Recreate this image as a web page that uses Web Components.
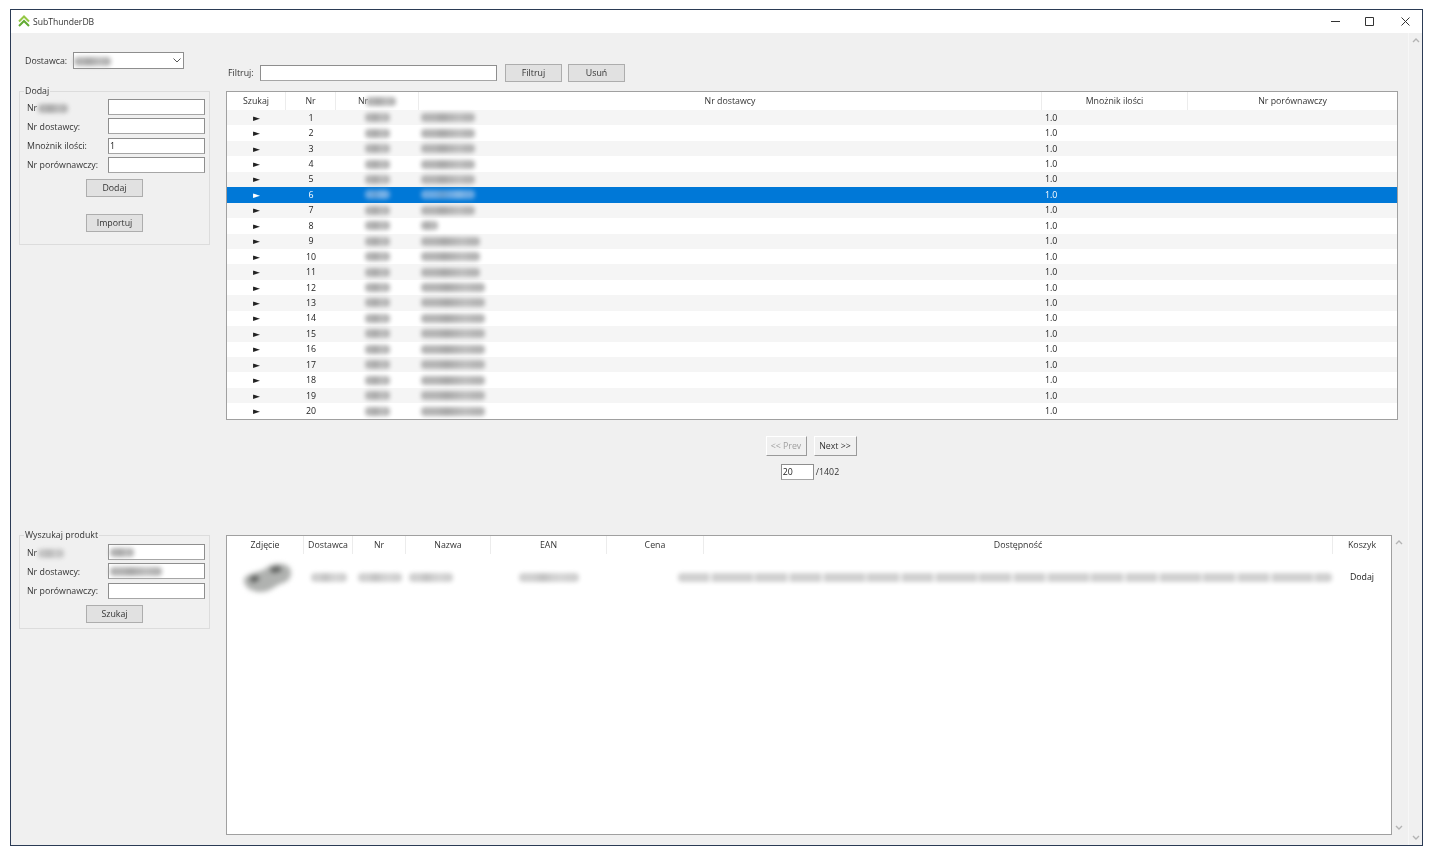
<!DOCTYPE html>
<html lang="pl">
<head>
<meta charset="utf-8">
<title>SubThunderDB</title>
<style>
  html, body { margin: 0; background: #fff; }
  body { padding: 9px 0 0 10px; font: 8.8px "Open Sans", "Liberation Sans", sans-serif; color: #222; }
</style>
</head>
<body>
<app-window>
  <title-bar slot="title" text="SubThunderDB"></title-bar>

  <split-pane style="height:502px">
    <side-column slot="side" pad="19">
      <field-row label="Dostawca:" wide>
        <combo-box><blur-text w="37" tone="#b4b4b4" gap="-1"></blur-text></combo-box>
      </field-row>
      <group-box legend="Dodaj" style="margin-top:22px">
        <field-row><span slot="label-extra">Nr <blur-text w="30" gap="-2"></blur-text></span><text-box></text-box></field-row>
        <field-row label="Nr dostawcy:"><text-box></text-box></field-row>
        <field-row label="Mnożnik ilości:"><text-box>1</text-box></field-row>
        <field-row label="Nr porównawczy:"><text-box></text-box></field-row>
        <button-row style="margin-top:2.67px"><win-button>Dodaj</win-button></button-row>
        <button-row style="margin-top:13.67px;margin-bottom:12px"><win-button>Importuj</win-button></button-row>
      </group-box>
    </side-column>
    <main-column>
      <filter-bar></filter-bar>
      <data-grid id="suppliers" style="height:329px"></data-grid>
      <pager-bar page="20" total="/1402"></pager-bar>
    </main-column>
  </split-pane>

  <split-pane style="height:300px" tight>
    <side-column slot="side">
      <group-box legend="Wyszukaj produkt">
        <field-row style="margin-top:1px"><span slot="label-extra">Nr <blur-text w="26" gap="-2" tone="#c4c4c4"></blur-text></span><text-box><blur-text w="24"></blur-text></text-box></field-row>
        <field-row label="Nr dostawcy:"><text-box><blur-text w="52"></blur-text></text-box></field-row>
        <field-row label="Nr porównawczy:"><text-box></text-box></field-row>
        <button-row style="margin-top:2.67px;margin-bottom:5px"><win-button>Szukaj</win-button></button-row>
      </group-box>
    </side-column>
    <main-column row>
      <data-grid id="products" style="flex:1"></data-grid>
      <scroll-bar></scroll-bar>
    </main-column>
  </split-pane>
</app-window>

<script>
function shadow(el, html) {
  el.attachShadow({ mode: 'open' });
  el.shadowRoot.innerHTML = html;
}

class AppWindow extends HTMLElement {
  connectedCallback() {
    shadow(this, `
      <style>
        :host { display: flex; flex-direction: column; width: 1413px; height: 837px; box-sizing: border-box;
          border: 1px solid #2b3b55; background: #f0f0f0; filter: blur(0.3px); }
        .body { flex: 1; display: flex; min-height: 0; }
        .main { flex: 1; min-width: 0; }
      </style>
      <slot name="title"></slot>
      <div class="body">
        <div class="main"><slot></slot></div>
        <scroll-bar outer></scroll-bar>
      </div>`);
  }
}

class TitleBar extends HTMLElement {
  connectedCallback() {
    shadow(this, `
      <style>
        :host { display: flex; align-items: center; height: 23px; background: #fff; padding-left: 7px; color: #333; }
        .logo { width: 12px; height: 12px; margin: -2px 3px 0 0; }
        .text { flex: 1; font-size: 8.6px; }
        .btn { width: 34px; height: 23px; display: flex; align-items: center; justify-content: center; }
        .btn.min { width: 30px; }
        .btn.mid { width: 38px; }
        .btn svg { width: 9px; height: 9px; }
      </style>
      <svg class="logo" viewBox="0 0 12 12"><path d="M1 6.500 6 1.500l5 5" fill="none" stroke="#94c845" stroke-width="2"/><path d="M1 11 6 6l5 5" fill="none" stroke="#62ab33" stroke-width="2"/></svg>
      <span class="text">${this.getAttribute('text')}</span>
      <span class="btn min"><svg viewBox="0 0 9 9"><path d="M0 4.500h9" stroke="#333" fill="none"/></svg></span>
      <span class="btn mid"><svg viewBox="0 0 9 9"><path d="M.5.5h8v8h-8z" stroke="#333" fill="none"/></svg></span>
      <span class="btn"><svg viewBox="0 0 9 9"><path d="M.5.5l8 8M8.500.5l-8 8" stroke="#333" fill="none"/></svg></span>`);
  }
}

class ScrollBar extends HTMLElement {
  connectedCallback() {
    const arrow = d => `<svg viewBox="0 0 8 5"><path d="${d}" fill="none" stroke="#b4b4b4" stroke-width="1.4"/></svg>`;
    shadow(this, `
      <style>
        :host { display: flex; flex-direction: column; justify-content: space-between; width: 14px; flex: none;
          box-sizing: border-box; padding: 5px 0; background: #f0f0f0; align-items: center; }
        :host([outer]) { border-left: 1px solid #f7f7f7; }
        svg { width: 8px; height: 5px; }
      </style>
      ${arrow('M1 4l3-3 3 3')}${arrow('M1 1l3 3 3-3')}`);
  }
}

class SplitPane extends HTMLElement {
  connectedCallback() {
    shadow(this, `
      <style>
        :host { display: grid; grid-template-columns: 193px 1fr; column-gap: 15px; box-sizing: border-box;
          padding: 0 10px 0 7px; }
        :host([tight]) { padding-right: 2px; }
      </style>
      <slot name="side"></slot><slot></slot>`);
  }
}

class SideColumn extends HTMLElement {
  connectedCallback() {
    shadow(this, `<style>:host { display: block; padding-top: ${this.getAttribute('pad') || 0}px; }</style><slot></slot>`);
  }
}

class MainColumn extends HTMLElement {
  connectedCallback() {
    shadow(this, `
      <style>
        :host { display: flex; flex-direction: column; min-width: 0; }
        :host([row]) { flex-direction: row; }
      </style><slot></slot>`);
  }
}

class GroupBox extends HTMLElement {
  connectedCallback() {
    shadow(this, `
      <style>
        :host { display: block; border: 1px solid #dcdcdc; padding: 0 4px 0 7px; margin: 0 1px; }
        .legend { width: fit-content; margin: -7px 0 1px -3px; padding: 0 1px; height: 13px; line-height: 13px; background: #f0f0f0; font-size: 8.8px; color: #333; }
        .rows { display: flex; flex-direction: column; gap: 3.33px; }
      </style>
      <div class="legend">${this.getAttribute('legend')}</div>
      <div class="rows"><slot></slot></div>`);
  }
}

class FieldRow extends HTMLElement {
  connectedCallback() {
    const label = this.getAttribute('label') || '';
    shadow(this, `
      <style>
        :host { display: flex; align-items: center; }
        .label { flex: none; width: 81px; padding-top: 1px; white-space: nowrap; color: #333; font-size: 8.8px; }
        :host([wide]) .label { width: 48px; padding-left: 7px; }
      </style>
      <span class="label">${label}<slot name="label-extra"></slot></span>
      <slot></slot>`);
  }
}

class TextBox extends HTMLElement {
  connectedCallback() {
    shadow(this, `
      <style>
        :host { display: flex; align-items: center; box-sizing: border-box; height: 16px; width: var(--w, 97px); padding-left: 1px;
          background: #fff; border: 1px solid #8e8e8e; border-bottom-color: #a6a6a6; color: #222; font-size: 8.8px; }
      </style><slot></slot>`);
  }
}

class ComboBox extends HTMLElement {
  connectedCallback() {
    shadow(this, `
      <style>
        :host { display: flex; align-items: center; box-sizing: border-box; height: 17px; width: 111px; padding-left: 1px;
          background: #fff; border: 1px solid #8e8e8e; }
        .val { flex: 1; }
        svg { width: 8px; height: 5px; margin-right: 2px; }
      </style>
      <span class="val"><slot></slot></span>
      <svg viewBox="0 0 8 5"><path d="M.500.5 4 4 7.500.5" fill="none" stroke="#555"/></svg>`);
  }
}

class WinButton extends HTMLElement {
  connectedCallback() {
    shadow(this, `
      <style>
        :host { display: flex; align-items: center; justify-content: center; box-sizing: border-box; width: 57px; height: 18px;
          background: #e1e1e1; border: 1px solid #adadad; color: #333; font-size: 8.8px; }
        :host([flat]) { width: 41px; height: 20px; background: #f0f0f0; border-color: #fff #9a9a9a #9a9a9a #fff; }
        :host([flat]:not([disabled])) { width: 43px; }
        :host([disabled]) { color: #a0a0a0; }
      </style><slot></slot>`);
  }
}

class ButtonRow extends HTMLElement {
  connectedCallback() {
    shadow(this, `<style>:host { display: flex; justify-content: center; margin-left: -3px; }</style><slot></slot>`);
  }
}

class BlurText extends HTMLElement {
  connectedCallback() {
    const w = this.getAttribute('w') || 30;
    const gap = this.getAttribute('gap') || 0;
    const tone = this.getAttribute('tone') || '#b4b4b4';
    // long values read as words under the blur, short ones as one mottled smear
    const texture = this.hasAttribute('words')
      ? 'repeating-linear-gradient(90deg, transparent 0 31px, rgba(255,255,255,.7) 31px 34px, transparent 34px 75px, rgba(255,255,255,.7) 75px 77px, transparent 77px 109px, rgba(255,255,255,.7) 109px 112px)'
      : 'linear-gradient(90deg, transparent 25%, rgba(0,0,0,.07) 40%, transparent 55%, rgba(255,255,255,.15) 70%, transparent 85%)';
    shadow(this, `
      <style>
        :host { display: inline-block; vertical-align: middle; width: ${w}px; height: 9px; margin-left: ${gap}px;
          background: ${texture}, ${tone}; border-radius: 4px; filter: blur(2.1px); }
      </style>`);
  }
}

class FilterBar extends HTMLElement {
  connectedCallback() {
    shadow(this, `
      <style>
        :host { display: flex; align-items: center; height: 18px; margin: 31px 0 9px; padding-left: 2px; color: #333; }
        .lbl { width: 32px; font-size: 8.8px; }
        text-box { --w: 237px; margin-right: 8px; }
        win-button { margin-right: 6px; }
      </style>
      <span class="lbl">Filtruj:</span>
      <text-box></text-box>
      <win-button>Filtruj</win-button>
      <win-button>Usuń</win-button>`);
  }
}

class PagerBar extends HTMLElement {
  connectedCallback() {
    shadow(this, `
      <style>
        :host { display: flex; flex-direction: column; align-items: center; margin-top: 16px; }
        .btns { display: flex; gap: 7px; margin-left: -2px; }
        .page { display: flex; align-items: center; margin-top: 8px; margin-left: -4px; color: #333; }
        text-box { --w: 33px; margin-right: 2px; }
      </style>
      <div class="btns"><win-button flat disabled>&lt;&lt; Prev</win-button><win-button flat>Next &gt;&gt;</win-button></div>
      <div class="page"><text-box>${this.getAttribute('page')}</text-box><span>${this.getAttribute('total')}</span></div>`);
  }
}

class DataGrid extends HTMLElement {
  constructor() {
    super();
    shadow(this, `
      <style>
        :host { display: block; box-sizing: border-box; background: #fff; border: 1px solid #a0a0a0; overflow: hidden; color: #222; font-size: 8.8px; }
        .row { display: grid; grid-template-columns: var(--cols); align-items: center; }
        .head { height: 18px; background: #fff; color: #333; }
        .head .cell { height: 18px; border-right: 1px solid #ececec; box-sizing: border-box; justify-content: center; }
        .head .cell:last-child { border-right: 0; }
        .cell { display: flex; align-items: center; min-width: 0; white-space: nowrap; }
        .c { justify-content: center; }
        .l { padding-left: 3px; }
        .alt { background: #f5f5f5; }
        .sel { background: #0078d7; color: #fff; }
        .tri { font: 9px "DejaVu Sans", sans-serif; }
      </style>
      <div id="grid"></div>`);
  }
  render(cols, head, rows, rowHeight, striped) {
    const grid = this.shadowRoot.getElementById('grid');
    grid.style.setProperty('--cols', cols.map(c => c + 'px').join(' '));
    const html = [`<div class="row head">${head.map(h => `<div class="cell">${h}</div>`).join('')}</div>`];
    rows.forEach((r, i) => {
      const cls = r.sel ? 'sel' : (striped && i % 2 === 0 ? 'alt' : '');
      html.push(`<div class="row ${cls}" style="height:${rowHeight}px">${r.cells.map(c => `<div class="cell ${c.a || 'c'}">${c.h}</div>`).join('')}</div>`);
    });
    grid.innerHTML = html.join('');
  }
}

customElements.define('app-window', AppWindow);
customElements.define('title-bar', TitleBar);
customElements.define('scroll-bar', ScrollBar);
customElements.define('split-pane', SplitPane);
customElements.define('side-column', SideColumn);
customElements.define('main-column', MainColumn);
customElements.define('group-box', GroupBox);
customElements.define('field-row', FieldRow);
customElements.define('text-box', TextBox);
customElements.define('combo-box', ComboBox);
customElements.define('win-button', WinButton);
customElements.define('button-row', ButtonRow);
customElements.define('blur-text', BlurText);
customElements.define('filter-bar', FilterBar);
customElements.define('pager-bar', PagerBar);
customElements.define('data-grid', DataGrid);

// supplier table, widths of the hidden values read off the reference
const widths = [54, 54, 54, 54, 54, 54, 54, 17, 59, 59, 59, 64, 64, 64, 64, 64, 64, 64, 64, 64];
const rows = widths.map((w, i) => {
  const sel = i === 5;
  const tone = sel ? '#6aa9e3' : '#b4b4b4';
  return {
    sel,
    cells: [
      { h: '<span class="tri">►</span>' },
      { h: String(i + 1) },
      { h: `<blur-text w="25" tone="${tone}"></blur-text>` },
      { a: 'l', h: `<blur-text w="${w}" tone="${tone}" gap="-1"></blur-text>` },
      { a: 'l', h: '1.0' },
      { h: '' }
    ]
  };
});
document.getElementById('suppliers').render(
  [59, 50, 83, 623, 146, 209],
  ['Szukaj', 'Nr', 'Nr <blur-text w="30" gap="-2"></blur-text>', 'Nr dostawcy', 'Mnożnik ilości', 'Nr porównawczy'],
  rows, 15.45, true);

const pale = '#d0d0d0';
document.getElementById('products').render(
  [77, 49, 53, 85, 116, 97, 629, 58],
  ['Zdjęcie', 'Dostawca', 'Nr', 'Nazwa', 'EAN', 'Cena', 'Dostępność', 'Koszyk'],
  [{ cells: [
    { h: '<svg width="56" height="36" viewBox="0 0 56 36" style="filter:blur(2.5px);margin-left:-1px"><path d="M7 20C10 14 20 14 28 10 34 4 46 3 52 8 56 14 54 22 46 24 38 26 34 33 24 33 14 33 6 28 7 20z" fill="#b0b2b0"/><path d="M12 19l7-3 4 4-7 4zM33 9l9-2 3 5-10 2z" fill="#5a5c5a"/></svg>' },
    { h: `<blur-text w="36" tone="${pale}"></blur-text>` },
    { h: `<blur-text w="44" tone="${pale}"></blur-text>` },
    { a: 'l', h: `<blur-text w="44" tone="${pale}"></blur-text>` },
    { h: `<blur-text w="60" tone="${pale}"></blur-text>` },
    { h: '' },
    { h: `<blur-text w="654" tone="${pale}" gap="-27" words></blur-text>` },
    { h: 'Dodaj' }
  ] }],
  46, false);
</script>
</body>
</html>
